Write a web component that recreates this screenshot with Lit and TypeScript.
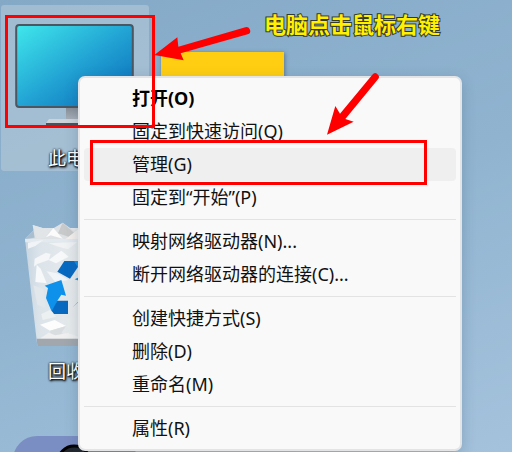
import { LitElement, html, css, svg, nothing } from "lit";
import { customElement } from "lit/decorators.js";
import { classMap } from "lit/directives/class-map.js";

const computerIcon = svg`
  <svg class="icon" viewBox="13 13 124 124" aria-hidden="true">
    <defs>
      <linearGradient id="screen" x1="0" y1="0" x2="1" y2="1">
        <stop offset="0" stop-color="#40e8ec" />
        <stop offset="0.5" stop-color="#22a4d4" />
        <stop offset="1" stop-color="#0866b8" />
      </linearGradient>
      <linearGradient id="stand" x1="0" y1="0" x2="0" y2="1">
        <stop offset="0" stop-color="#858c95" />
        <stop offset="1" stop-color="#a9b1ba" />
      </linearGradient>
    </defs>
    <rect x="66" y="107" width="18" height="13" fill="url(#stand)" />
    <path d="M49 119H101L104 123H46Z" fill="#cdd3d9" />
    <rect x="46" y="123" width="58" height="2.5" fill="#4a525c" />
    <rect x="16.2" y="25" width="116.6" height="82" rx="3" fill="url(#screen)" stroke="#4b5660" stroke-width="2" />
  </svg>`;

const folderIcon = svg`
  <svg class="icon" viewBox="0 0 124 124" aria-hidden="true">
    <rect class="folder" x="0" y="39" width="123" height="72" fill="#ffce12" />
  </svg>`;

const binIcon = svg`
  <svg class="icon" viewBox="39 78 372 372" aria-hidden="true">
    <defs>
      <linearGradient id="glass" x1="0" y1="0" x2="1" y2="0">
        <stop offset="0" stop-color="#c6d5e1" />
        <stop offset="0.15" stop-color="#dce4ea" />
        <stop offset="0.5" stop-color="#e6eaec" />
        <stop offset="1" stop-color="#cdd5da" />
      </linearGradient>
    </defs>
    <path d="M75 117L108 84H345L375 117L338 438H112Z" fill="url(#glass)" />
    <path d="M75 117L108 84L114 112Z" fill="#a9bfcf" />
    <path d="M98 75L150 91L188 68L222 92L260 78L320 86L345 118L105 120Z" fill="#dfe2e5" />
    <path d="M98 75L150 91L138 112L112 116Z" fill="#e2e5e8" />
    <path d="M138 112L160 84L188 116L152 106Z" fill="#fbfbfb" />
    <path d="M174 100L188 68L222 98L206 110Z" fill="#c8c9ca" />
    <path d="M206 110L236 86V118L192 120Z" fill="#f4f0ed" />
    <path d="M75 117H375L372 127H76Z" fill="#e2e9ef" />
    <path d="M84 128L130 120L106 138L84 146Z" fill="#f1f4f6" />
    <path d="M104 176L138 158L152 162L146 180L112 192L102 200Z" fill="#f4f6f8" />
    <path d="M146 130L232 126L204 148L176 140Z" fill="#f0f2f4" />
    <path d="M146 180L184 152L206 170L168 190Z" fill="#f7f8f9" />
    <path d="M110 194L122 206L140 250L106 246Z" fill="#f6f8f9" />
    <path d="M100 256L130 266L138 324L112 314Z" fill="#e1e7eb" />
    <path d="M140 214L170 220L206 240L166 246Z" fill="#f2f5f7" />
    <path d="M124 342L150 330L168 350L128 360Z" fill="#edf0f1" />
    <path d="M120 374L164 360L198 378L150 392Z" fill="#fdfdfd" />
    <path d="M150 392L198 378L184 400L218 410L156 414Z" fill="#d9dddf" />
    <path d="M122 414L146 398L166 406L206 398L234 410V416H122Z" fill="#eff0ef" />
    <path d="M198 354L240 348V404L208 402Z" fill="#e6eaeb" />
    <path d="M110 416H341L338 438H112Z" fill="#a1a7ac" />
    <path d="M193 183H224L240 192L210 236L172 215Z" fill="#0869c1" />
    <path d="M222 183H270L292 222L248 226Z" fill="#0e91ea" />
    <path d="M134 257L184 240L198 287L184 284L172 302L162 340L154 332L138 294L144 264Z" fill="#0e91ea" />
    <path d="M172 302H204V342H162L156 332Z" fill="#0869c1" />
    <path d="M218 322L242 300V342H290L312 300L280 270L254 286Z" fill="#0e91ea" />
    <path d="M224 238L240 230L248 246Z" fill="#0e91ea" />
  </svg>`;

const appIcon = svg`
  <svg class="icon" viewBox="13 439 124 124" aria-hidden="true">
    <rect x="13" y="436" width="124" height="124" rx="24" fill="#7b8ec3" />
    <circle cx="74" cy="462" r="16" fill="#22272e" stroke="#000" stroke-width="3" />
  </svg>`;

const shortcuts = [
  { name: "此电脑", icon: computerIcon, selected: true },
  { name: "", icon: folderIcon, selected: false },
  { name: "回收站", icon: binIcon, selected: false },
  { name: "", icon: nothing, selected: false },
  { name: "", icon: appIcon, selected: false },
];

const menuGroups = [
  ["打开(O)", "固定到快速访问(Q)", "管理(G)", "固定到“开始”(P)"],
  ["映射网络驱动器(N)...", "断开网络驱动器的连接(C)..."],
  ["创建快捷方式(S)", "删除(D)", "重命名(M)"],
  ["属性(R)"],
];

@customElement("desktop-menu")
export class DesktopMenu extends LitElement {
  static styles = css`
    :host {
      display: block;
      box-sizing: border-box;
      padding: 4px;
      border: 2px solid #e3e4e5;
      border-radius: 7px;
      background: #f9f9f9;
      box-shadow: 0 4px 14px rgba(30, 60, 90, 0.22);
    }
    .group + .group {
      margin-top: 5px;
      padding-top: 5px;
      border-top: 1px solid #e3e3e3;
    }
    .item {
      display: block;
      width: 100%;
      height: 33px;
      padding: 0 48px;
      border: 0;
      border-radius: 4px;
      background: none;
      color: #111;
      font: 400 18px/33px "Noto Sans", "Noto Sans CJK SC", sans-serif;
      text-align: left;
      white-space: nowrap;
    }
    .main {
      color: #000;
      font-weight: 700;
    }
    .hover,
    .item:hover {
      background: #efefef;
    }
  `;

  render() {
    return html`${menuGroups.map(
      (group, g) => html`<div class="group" role="group">
        ${group.map(
          (label, i) => html`<button
            type="button"
            role="menuitem"
            class=${classMap({ item: true, main: g === 0 && i === 0, hover: g === 0 && i === 2 })}
          >${label}</button>`
        )}
      </div>`
    )}`;
  }
}

@customElement("app-root")
export class AppRoot extends LitElement {
  static styles = css`
    :host {
      display: block;
      position: relative;
      box-sizing: border-box;
      height: 100vh;
      padding: 5px 0 0 1px;
      overflow: hidden;
      background: linear-gradient(160deg, #84a9c7 0%, #90b4d0 50%, #a5c2dc 100%);
      font-family: "Noto Sans", "Noto Sans CJK SC", sans-serif;
    }
    .desktop {
      display: grid;
      grid-template-columns: repeat(2, 148px);
      grid-auto-rows: 166px;
      row-gap: 47px;
    }
    .shortcut {
      display: flex;
      flex-direction: column;
      align-items: center;
      gap: 8px;
      padding: 8px 0 0;
      border: 0;
      border-radius: 3px;
      background: none;
      color: #fff;
      font: 18px/24px "Noto Sans CJK SC", sans-serif;
      text-shadow: 0 0 2px #000, 1px 1px 2px #000, 1px 1px 3px #000;
    }
    .selected {
      background: rgba(190, 206, 218, 0.5);
    }
    .icon {
      display: block;
      width: 124px;
      height: 124px;
      overflow: visible;
    }
    .folder {
      filter: drop-shadow(1px 1px 2px rgba(40, 60, 90, 0.5));
    }
    .menu {
      position: absolute;
      left: 78px;
      top: 76px;
      width: 384px;
    }
    .frame {
      position: absolute;
      box-sizing: border-box;
      border: 3px solid #f00;
      pointer-events: none;
    }
    .frame-icon {
      left: 5px;
      top: 15px;
      width: 150px;
      height: 113px;
    }
    .frame-item {
      left: 90px;
      top: 140px;
      width: 337px;
      height: 45px;
    }
    .arrows {
      position: absolute;
      left: 150px;
      top: 0;
      width: 240px;
      height: 150px;
      pointer-events: none;
    }
    .note {
      position: absolute;
      left: 264px;
      top: 7px;
      margin: 0;
      color: #ffef00;
      font: 700 22px/32px "Noto Sans CJK SC", sans-serif;
      white-space: nowrap;
      -webkit-text-stroke: 2px #333a30;
      paint-order: stroke fill;
    }
  `;

  render() {
    return html`
      <main class="desktop">
        ${shortcuts.map((s) =>
          s.icon === nothing
            ? html`<span></span>`
            : html`<button type="button" class=${classMap({ shortcut: true, selected: s.selected })}>
                ${s.icon}<span>${s.name}</span>
              </button>`
        )}
      </main>
      <desktop-menu class="menu" role="menu"></desktop-menu>
      <div class="frame frame-icon"></div>
      <div class="frame frame-item"></div>
      <svg class="arrows" viewBox="0 0 720 450" aria-hidden="true">
        <path fill="#f00" d="M13 165L82 112L85 140L286 82A11 11 0 0 1 293 103L92 160L101 181Z" />
        <path fill="#f00" d="M531 404L556 318L570 341L667 224A11 11 0 0 1 684 238L586 357L611 365Z" />
      </svg>
      <p class="note">电脑点击鼠标右键</p>
    `;
  }
}
